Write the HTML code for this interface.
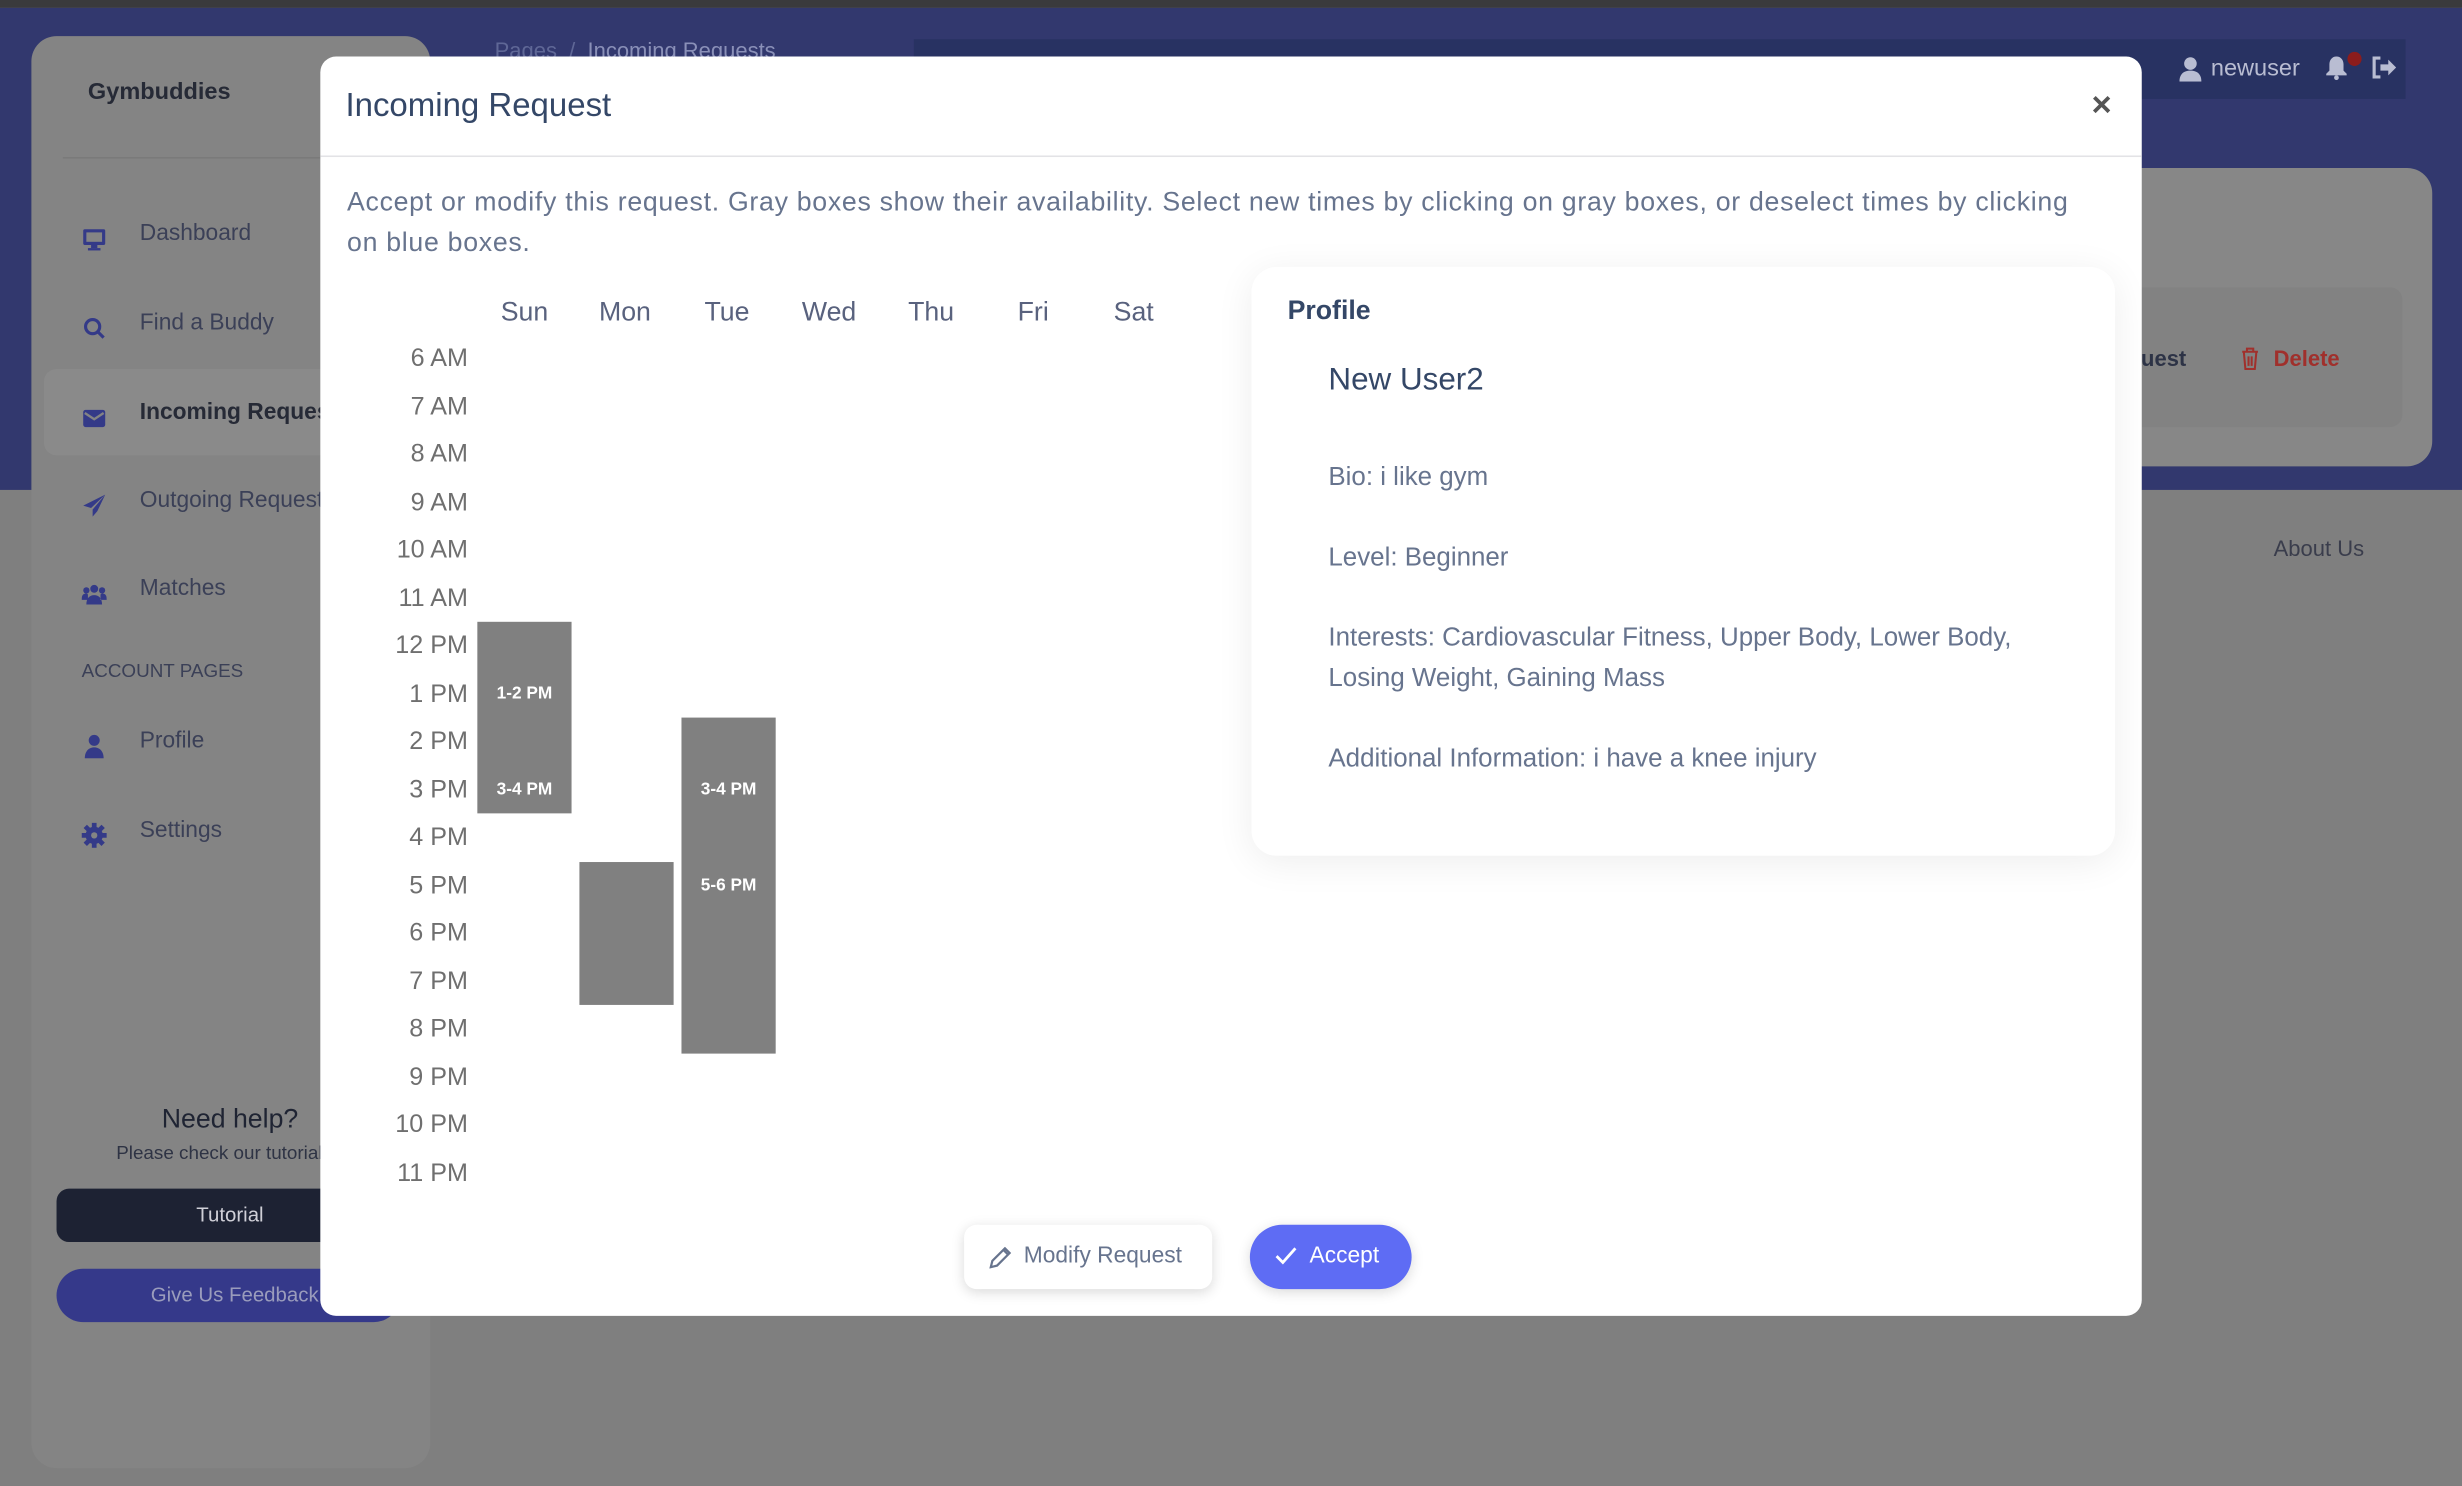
<!DOCTYPE html>
<html><head><meta charset="utf-8"><style>
*{box-sizing:border-box;margin:0;padding:0}
html,body{width:2462px;height:1486px;overflow:hidden;background:#7f7f7f}
#w{position:absolute;left:0;top:0;width:1568px;height:946px;transform:scale(1.5702);transform-origin:0 0;font-family:"Liberation Sans",sans-serif;background:#7f7f7f}
.a{position:absolute;white-space:nowrap}
.nav{position:absolute;left:89px;font-size:14.5px;color:#3b4057;transform:translateY(-50%)}
.ic{position:absolute;left:52px;width:16px;height:16px;transform:translateY(-50%)}
.t{position:absolute;right:0;width:60px;text-align:right;font-size:16px;color:#6f6f6f;transform:translateY(-50%)}
.d{position:absolute;font-size:17px;color:#59627e;transform:translate(-50%,-50%)}
.b{position:absolute;background:#808080;width:60px}
.bl{position:absolute;color:#fff;font-size:11px;font-weight:bold;width:60px;text-align:center;transform:translateY(-50%)}
.p{position:absolute;left:49px;font-size:16.5px;color:#67748e;line-height:26px}
</style></head><body><div id="w">
<div class="a" style="left:0;top:0;width:1568px;height:5px;background:#3a3a3c"></div>
<div class="a" style="left:0;top:5px;width:1568px;height:307px;background:#32386e"></div>
<div class="a" style="left:315px;top:24px;font-size:14px;color:#5f6796">Pages &nbsp;/&nbsp; <span style="color:#8a90b8">Incoming Requests</span></div>
<div class="a" style="left:582px;top:25px;width:950px;height:38px;background:#283262"></div>
<svg class="a" style="left:1388px;top:36px" width="14" height="16" viewBox="0 0 14 16"><circle cx="7" cy="4.5" r="4" fill="#b9bdd2"/><path d="M0 16c0-5 3-7 7-7s7 2 7 7z" fill="#b9bdd2"/></svg>
<div class="a" style="left:1408px;top:35px;font-size:15px;color:#b9bdd2">newuser</div>
<svg class="a" style="left:1481px;top:35px" width="14" height="16" viewBox="0 0 14 16"><path d="M7 1c3 0 4.5 2.5 4.5 5v4l2 2v1H.5v-1l2-2V6C2.5 3.5 4 1 7 1z" fill="#b9bdd2"/><circle cx="7" cy="14.5" r="1.5" fill="#b9bdd2"/></svg>
<div class="a" style="left:1495px;top:33px;width:9px;height:9px;border-radius:50%;background:#8c1c1c"></div>
<svg class="a" style="left:1510px;top:36px" width="16" height="14" viewBox="0 0 16 14"><path d="M6 1H2v12h4" stroke="#b9bdd2" stroke-width="2" fill="none"/><path d="M6 5h5V2l5 5-5 5V9H6z" fill="#b9bdd2"/></svg>
<div class="a" style="left:1300px;top:107px;width:249px;height:190px;background:#878787;border-radius:16px"></div>
<div class="a" style="left:1300px;top:183px;width:230px;height:89px;background:#828282;border-radius:8px"></div>
<div class="a" style="left:1355px;top:220px;font-size:14px;font-weight:bold;color:#2d3346">quest</div>
<svg class="a" style="left:1427px;top:221px" width="12" height="15" viewBox="0 0 12 15"><path d="M1 3h10M4 3V1h4v2M2 3l1 11h6l1-11M5 6v6M7 6v6" stroke="#a0302c" stroke-width="1.3" fill="none"/></svg>
<div class="a" style="left:1448px;top:220px;font-size:14px;font-weight:bold;color:#a0302c">Delete</div>
<div class="a" style="left:1448px;top:341px;font-size:14px;color:#3a3d4c">About Us</div>
<div class="a" style="left:20px;top:23px;width:254px;height:912px;background:#848484;border-radius:16px"></div>
<div class="a" style="left:56px;top:50px;font-size:15px;font-weight:bold;color:#262a36">Gymbuddies</div>
<div class="a" style="left:40px;top:100px;width:220px;height:1px;background:#7a7a7a"></div>
<div class="a" style="left:28px;top:235px;width:200px;height:55px;background:#8a8a8a;border-radius:8px"></div>
<svg class="ic" style="top:152px" viewBox="0 0 16 16"><rect x="1" y="2" width="14" height="10" rx="1" fill="#343a88"/><rect x="3" y="4" width="10" height="6" fill="#848484"/><rect x="6" y="12" width="4" height="2" fill="#343a88"/><rect x="4" y="14" width="8" height="1.5" fill="#343a88"/></svg>
<div class="nav" style="top:149px">Dashboard</div>
<svg class="ic" style="top:209px" viewBox="0 0 16 16"><circle cx="7" cy="7" r="4.5" stroke="#343a88" stroke-width="2" fill="none"/><path d="M10 10l4 4" stroke="#343a88" stroke-width="2"/></svg>
<div class="nav" style="top:206px">Find a Buddy</div>
<svg class="ic" style="top:266px" viewBox="0 0 16 16"><rect x="1" y="3" width="14" height="11" rx="1.5" fill="#343a88"/><path d="M2 5l6 4 6-4" stroke="#848484" stroke-width="1.5" fill="none"/></svg>
<div class="nav" style="top:263px;font-weight:bold;color:#262a36">Incoming Requests</div>
<svg class="ic" style="top:322px" viewBox="0 0 16 16"><path d="M15 1L1 8l5 1.5L15 1 7 10.5V15l3-3.5z" fill="#343a88"/></svg>
<div class="nav" style="top:319px">Outgoing Requests</div>
<svg class="ic" style="top:378px" viewBox="0 0 16 16"><circle cx="8" cy="5" r="2.5" fill="#343a88"/><circle cx="3" cy="6" r="2" fill="#343a88"/><circle cx="13" cy="6" r="2" fill="#343a88"/><path d="M3 15c0-4 2-6 5-6s5 2 5 6zM0 12c0-3 1-4 3-4l1 .5V12zM16 12c0-3-1-4-3-4l-1 .5V12z" fill="#343a88"/></svg>
<div class="nav" style="top:375px">Matches</div>
<div class="a" style="left:52px;top:420px;font-size:12px;color:#3b4057">ACCOUNT PAGES</div>
<svg class="ic" style="top:475px" viewBox="0 0 16 16"><circle cx="8" cy="4.5" r="3.5" fill="#343a88"/><path d="M2 16c0-5 3-7 6-7s6 2 6 7z" fill="#343a88"/></svg>
<div class="nav" style="top:472px">Profile</div>
<svg class="ic" style="top:532px" viewBox="0 0 16 16"><circle cx="8" cy="8" r="5.5" fill="#343a88"/><path d="M8 0v16M0 8h16M2.3 2.3l11.4 11.4M13.7 2.3L2.3 13.7" stroke="#343a88" stroke-width="3"/><circle cx="8" cy="8" r="2" fill="#848484"/></svg>
<div class="nav" style="top:529px">Settings</div>
<div class="a" style="left:103px;top:703px;font-size:17px;color:#1f2433">Need help?</div>
<div class="a" style="left:74px;top:727px;font-size:12px;color:#2e3344">Please check our tutorial</div>
<div class="a" style="left:36px;top:757px;width:219px;height:34px;background:#1d2233;border-radius:8px"></div>
<div class="a" style="left:125px;top:766px;font-size:13px;color:#d0d0d8">Tutorial</div>
<div class="a" style="left:36px;top:808px;width:219px;height:34px;background:#35398a;border-radius:17px"></div>
<div class="a" style="left:96px;top:817px;font-size:13px;color:#9a9cbc">Give Us Feedback</div>
<div class="a" style="left:204px;top:36px;width:1160px;height:802px;background:#fff;border-radius:10px;overflow:hidden">
  <div class="a" style="left:16px;top:20px;font-size:21px;color:#344767">Incoming Request</div>
  <div class="a" style="left:1128px;top:18px;font-size:22px;font-weight:bold;color:#555">×</div>
  <div class="a" style="left:0;top:63px;width:1160px;height:1px;background:#e3e3e6"></div>
  <div class="a" style="left:17px;top:80px;width:1108px;font-size:17px;letter-spacing:0.45px;color:#67748e;line-height:26px;white-space:normal">Accept or modify this request. Gray boxes show their availability. Select new times by clicking on gray boxes, or deselect times by clicking on blue boxes.</div>
  <div class="a" style="left:0;top:1px;width:560px;height:760px">
    <div class="d" style="left:130px;top:162px">Sun</div>
    <div class="d" style="left:194px;top:162px">Mon</div>
    <div class="d" style="left:259px;top:162px">Tue</div>
    <div class="d" style="left:324px;top:162px">Wed</div>
    <div class="d" style="left:389px;top:162px">Thu</div>
    <div class="d" style="left:454px;top:162px">Fri</div>
    <div class="d" style="left:518px;top:162px">Sat</div>
    <div class="b" style="left:100px;top:359px;height:122px"></div>
    <div class="b" style="left:165px;top:512px;height:91px"></div>
    <div class="b" style="left:230px;top:420px;height:214px"></div>
    <div class="bl" style="left:100px;top:405px">1-2 PM</div>
    <div class="bl" style="left:100px;top:466px">3-4 PM</div>
    <div class="bl" style="left:230px;top:466px">3-4 PM</div>
    <div class="bl" style="left:230px;top:527px">5-6 PM</div>
    <div style="position:absolute;left:34px;top:0;width:60px">
      <div class="t" style="top:192px">6 AM</div><div class="t" style="top:222.5px">7 AM</div><div class="t" style="top:253px">8 AM</div><div class="t" style="top:283.5px">9 AM</div><div class="t" style="top:314px">10 AM</div><div class="t" style="top:344.5px">11 AM</div><div class="t" style="top:375px">12 PM</div><div class="t" style="top:405.5px">1 PM</div><div class="t" style="top:436px">2 PM</div><div class="t" style="top:466.5px">3 PM</div><div class="t" style="top:497px">4 PM</div><div class="t" style="top:527.5px">5 PM</div><div class="t" style="top:558px">6 PM</div><div class="t" style="top:588.5px">7 PM</div><div class="t" style="top:619px">8 PM</div><div class="t" style="top:649.5px">9 PM</div><div class="t" style="top:680px">10 PM</div><div class="t" style="top:710.5px">11 PM</div>
    </div>
  </div>
  <div class="a" style="left:593px;top:134px;width:550px;height:375px;background:#fff;border-radius:16px;box-shadow:0 4px 24px rgba(0,0,0,.07)">
    <div class="a" style="left:23px;top:18px;font-size:17px;font-weight:bold;color:#344767">Profile</div>
    <div class="a" style="left:49px;top:61px;font-size:20px;color:#344767">New User2</div>
    <div class="p" style="top:121px">Bio: i like gym</div>
    <div class="p" style="top:172px">Level: Beginner</div>
    <div class="p" style="top:223px">Interests: Cardiovascular Fitness, Upper Body, Lower Body,<br>Losing Weight, Gaining Mass</div>
    <div class="p" style="top:300px">Additional Information: i have a knee injury</div>
  </div>
  <div class="a" style="left:410px;top:744px;width:158px;height:41px;background:#fff;border-radius:8px;box-shadow:0 2px 8px rgba(0,0,0,.15)">
    <svg class="a" style="left:16px;top:14px" width="14" height="14" viewBox="0 0 14 14"><path d="M10 1l3 3-8 8-4 1 1-4z M9 2l3 3" stroke="#67748e" stroke-width="1.4" fill="none"/></svg>
    <div class="a" style="left:38px;top:12px;font-size:14.5px;color:#67748e">Modify Request</div>
  </div>
  <div class="a" style="left:592px;top:744px;width:103px;height:41px;background:#5e6cf4;border-radius:21px;box-shadow:0 2px 8px rgba(0,0,0,.15)">
    <svg class="a" style="left:16px;top:14px" width="14" height="12" viewBox="0 0 14 12"><path d="M1 6l4 4 8-9" stroke="#fff" stroke-width="1.8" fill="none"/></svg>
    <div class="a" style="left:38px;top:12px;font-size:14.5px;color:#fff">Accept</div>
  </div>
</div>
</div></body></html>
